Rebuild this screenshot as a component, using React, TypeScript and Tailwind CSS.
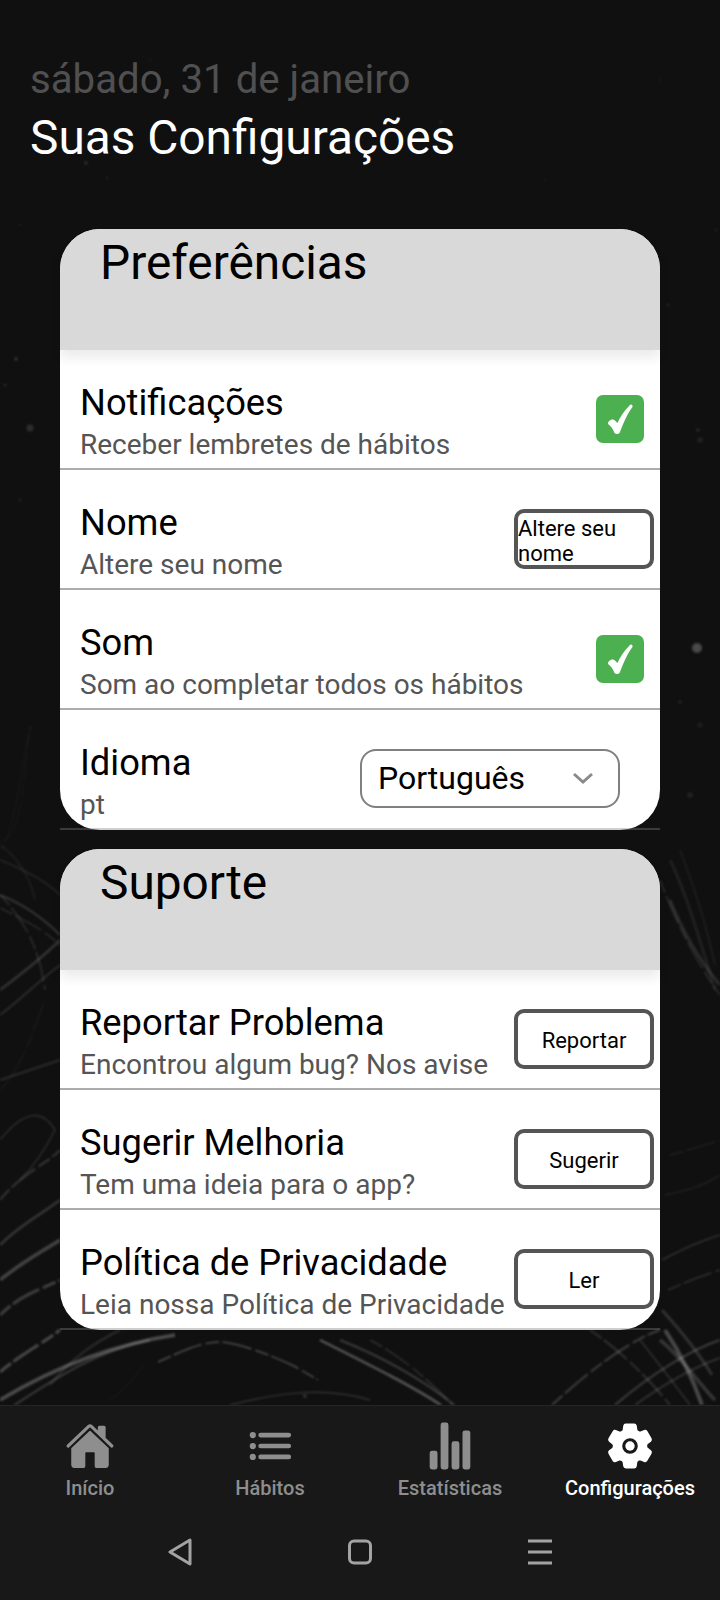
import React from "react";
import { IoHome, IoList, IoStatsChart, IoSettings } from "react-icons/io5";

const scratches: [string, number, number][] = [
  ["M158 1362 C185 1350 200 1342 222 1342 C245 1345 270 1355 294 1366 L318 1380", 0.26, 1.5],
  ["M320 1340 C370 1365 420 1390 445 1408", 0.3, 2.5],
  ["M340 1340 C390 1360 430 1385 458 1408", 0.18, 2],
  ["M370 1340 C400 1355 435 1385 455 1408", 0.14, 1.5],
  ["M0 1400 C50 1370 110 1345 175 1335", 0.26, 3.5],
  ["M10 1408 C60 1375 100 1350 150 1340", 0.18, 2],
  ["M0 1372 C20 1355 40 1345 60 1330", 0.24, 3],
  ["M110 1400 C130 1385 135 1375 145 1365", 0.08, 1],
  ["M230 1405 C270 1395 320 1385 370 1400", 0.14, 1.5],
  ["M552 1405 C590 1370 630 1340 660 1330", 0.2, 2],
  ["M615 1405 C650 1375 690 1350 720 1340", 0.2, 2],
  ["M635 1405 C670 1380 700 1365 720 1358", 0.14, 2],
  ["M590 1330 C620 1350 650 1380 670 1405", 0.14, 2],
  ["M665 1330 C685 1360 695 1385 702 1405", 0.24, 4],
  ["M640 1340 C660 1365 675 1385 690 1405", 0.12, 2],
  ["M0 895 C25 920 40 950 45 990", 0.1, 2],
  ["M0 845 C15 855 30 875 35 900", 0.08, 1.5],
  ["M0 850 C15 840 25 735 32 725", 0.05, 1],
  ["M0 842 C15 835 20 830 30 725", 0.05, 1],
  ["M0 895 C25 905 45 920 60 935", 0.16, 2],
  ["M0 860 C20 868 45 880 60 895", 0.1, 1.5],
  ["M0 908 C20 918 45 930 60 945", 0.12, 1.5],
  ["M0 990 C20 975 45 955 60 940", 0.15, 2.5],
  ["M0 1015 C20 1000 40 980 60 965", 0.12, 2],
  ["M0 1090 C20 1070 30 1040 45 1000", 0.05, 1.5],
  ["M0 1080 C30 1070 45 1065 60 1060", 0.12, 2],
  ["M0 1140 C20 1115 40 1105 55 1130 C45 1150 35 1165 20 1180", 0.12, 1.5],
  ["M0 1200 C20 1175 45 1165 60 1150", 0.16, 2],
  ["M0 1245 C20 1225 40 1215 60 1200", 0.16, 2.5],
  ["M0 1280 C25 1260 45 1250 60 1240", 0.22, 3.5],
  ["M0 1315 C20 1295 40 1290 60 1280", 0.2, 3],
  ["M670 860 C685 890 700 940 715 990", 0.07, 3],
  ["M670 900 C680 925 695 955 720 985", 0.12, 3],
  ["M660 880 C675 920 695 960 720 995", 0.1, 2],
  ["M680 850 C695 890 705 920 715 965", 0.06, 2],
  ["M660 1340 C680 1355 700 1385 715 1400", 0.16, 3.5],
  ["M670 1155 C690 1150 705 1145 720 1140", 0.08, 1.5],
  ["M665 1195 C690 1190 705 1185 720 1175", 0.08, 1.5],
  ["M662 1260 C690 1245 705 1240 720 1235", 0.14, 1.5],
  ["M668 1290 C690 1280 705 1275 720 1270", 0.14, 1.5],
  ["M662 1310 C680 1330 700 1355 712 1375", 0.14, 3],
  ["M120 1330 C90 1345 70 1360 50 1385", 0.12, 2],
];

const specks: [number, number, number, number][] = [
  [441, 122, 2, 0.07], [86, 163, 2, 0.1], [107, 178, 1.5, 0.07], [16, 359, 2, 0.14], [5, 385, 1.5, 0.1],
  [30, 428, 3.5, 0.12], [20, 500, 2, 0.05], [697, 648, 5, 0.24], [680, 702, 2, 0.07], [700, 725, 3, 0.05],
  [690, 795, 3, 0.07], [700, 440, 3, 0.07], [668, 305, 2, 0.06], [660, 80, 1.5, 0.04], [716, 230, 1.5, 0.07],
  [20, 225, 1.5, 0.05], [150, 60, 1.5, 0.05], [545, 180, 1.5, 0.04], [305, 1396, 2, 0.14], [698, 430, 2, 0.09],
];

function Row({ title, sub, last, children }: { title: string; sub: string; last?: boolean; children?: React.ReactNode }) {
  return (
    <div className={last ? "h-[120px] pt-[20px] border-b-2 border-[#80808060] flex items-center" : "h-[120px] pt-[20px] border-b-2 border-[#808080a6] flex items-center"}>
      <div className="pl-[20px] pt-[10px] flex-1 min-w-0">
        <div className="text-[36.3px] leading-[41px] text-black whitespace-nowrap">{title}</div>
        <div className="text-[28px] leading-[43px] text-[#555555] whitespace-nowrap">{sub}</div>
      </div>
      {children}
    </div>
  );
}

function Check() {
  return (
    <div className="w-[48px] h-[48px] mr-[16px] rounded-[7px] bg-[#4caf50] flex items-center justify-center shrink-0">
      <svg width="30" height="34" viewBox="0 0 30 34">
        <path d="M3 22 C6 24 8 27 9.5 31 C11 32.5 14 32.5 15 30 C18 22 22 12 27.5 5 C28 3 26 2 25 3 C19 9 15 15 12.5 21 C11 20 10 18 8 17.5 C5.5 17 2.5 20 3 22 Z" fill="#ffffff" />
      </svg>
    </div>
  );
}

function Btn({ children, left }: { children: React.ReactNode; left?: boolean }) {
  return (
    <div
      className={
        left
          ? "w-[140px] h-[60px] mr-[6px] shrink-0 bg-white border-4 border-[#555555] rounded-[10px] text-[22px] leading-[25px] text-black pt-[4px] flex items-center"
          : "w-[140px] h-[60px] mr-[6px] shrink-0 bg-white border-4 border-[#555555] rounded-[10px] text-[22px] leading-[25px] text-black flex items-center justify-center pt-[3px]"
      }
    >
      {children}
    </div>
  );
}

function Header({ children }: { children: React.ReactNode }) {
  return (
    <div className="h-[121px] rounded-t-[40px] bg-[#d9d9d9] pl-[40px] shadow-[0_8px_12px_rgba(0,0,0,0.08)] relative">
      <div className="text-[47.8px] leading-[68px] text-black">{children}</div>
    </div>
  );
}

function Card({ children }: { children: React.ReactNode }) {
  return <div className="w-[600px] ml-[60px] bg-white rounded-[40px]">{children}</div>;
}

function NavItem({ icon, label, active }: { icon: React.ReactNode; label: string; active?: boolean }) {
  return (
    <div className={active ? "w-[180px] flex flex-col items-center text-white" : "w-[180px] flex flex-col items-center text-[#8e8e8e]"}>
      <div className="h-[52px] flex items-center justify-center">{icon}</div>
      <div className="text-[20px] leading-[24px] font-medium mt-[4px] whitespace-nowrap">{label}</div>
    </div>
  );
}

export default function App() {
  return (
    <div className="w-[720px] h-[1600px] relative overflow-hidden bg-[#101010] flex flex-col font-['Roboto',sans-serif]">
      <svg className="absolute left-0 top-0 blur-[1px]" width="720" height="1405" viewBox="0 0 720 1405" fill="none">
        {scratches.map(([d, o, w], i) => (
          <path key={i} d={d} stroke="#ffffff" strokeOpacity={o} strokeWidth={w} strokeDasharray={i % 3 === 0 ? "14 3 30 4" : undefined} />
        ))}
        {specks.map(([x, y, r, o], i) => (
          <circle key={i} cx={x} cy={y} r={r} fill="#ffffff" fillOpacity={o} />
        ))}
      </svg>

      <main className="relative flex-1 min-h-0 pt-[56px]">
        <div className="pl-[30px]">
          <div className="text-[40.2px] leading-[48px] text-[#505050]">sábado, 31 de janeiro</div>
          <div className="text-[47.8px] leading-[48px] mt-[10px] text-white">Suas Configurações</div>
        </div>

        <div className="mt-[67px]">
          <Card>
            <Header>Preferências</Header>
            <Row title="Notificações" sub="Receber lembretes de hábitos"><Check /></Row>
            <Row title="Nome" sub="Altere seu nome"><Btn left>Altere seu nome</Btn></Row>
            <Row title="Som" sub="Som ao completar todos os hábitos"><Check /></Row>
            <Row title="Idioma" sub="pt" last>
              <div className="w-[260px] h-[59px] mr-[40px] -mt-[2px] shrink-0 rounded-[16px] border-2 border-[#808080] bg-white flex items-center justify-between pl-[16px] pr-[24px] text-[32px] text-black">
                <span>Português</span>
                <svg width="22" height="14" viewBox="0 0 22 14" fill="none">
                  <path d="M2 3 L11 11 L20 3" stroke="#8a8a8a" strokeWidth="3" />
                </svg>
              </div>
            </Row>
          </Card>
        </div>

        <div className="mt-[19px]">
          <Card>
            <Header>Suporte</Header>
            <Row title="Reportar Problema" sub="Encontrou algum bug? Nos avise"><Btn>Reportar</Btn></Row>
            <Row title="Sugerir Melhoria" sub="Tem uma ideia para o app?"><Btn>Sugerir</Btn></Row>
            <Row title="Política de Privacidade" sub="Leia nossa Política de Privacidade" last><Btn>Ler</Btn></Row>
          </Card>
        </div>
      </main>

      <nav className="relative h-[195px] bg-[#181818] border-t border-[#262626] shrink-0">
        <div className="flex pt-[14px]">
          <NavItem icon={<IoHome size={50} />} label="Início" />
          <NavItem icon={<IoList size={50} />} label="Hábitos" />
          <NavItem icon={<IoStatsChart size={50} />} label="Estatísticas" />
          <NavItem icon={<IoSettings size={50} />} label="Configurações" active />
        </div>
        <div className="flex mt-[38px] justify-center">
          <div className="w-[180px] flex justify-center">
            <svg width="26" height="28" viewBox="0 0 26 28" fill="none">
              <path d="M23 2 L3 14 L23 26 Z" stroke="#a3a3a3" strokeWidth="3" strokeLinejoin="round" />
            </svg>
          </div>
          <div className="w-[180px] flex justify-center">
            <svg width="26" height="28" viewBox="0 0 26 28" fill="none">
              <rect x="2.5" y="3" width="21" height="22" rx="4.5" stroke="#a3a3a3" strokeWidth="3" />
            </svg>
          </div>
          <div className="w-[180px] flex justify-center">
            <svg width="26" height="28" viewBox="0 0 26 28" fill="none">
              <path d="M1 3 H25 M1 14 H25 M1 25 H25" stroke="#a3a3a3" strokeWidth="3" />
            </svg>
          </div>
        </div>
      </nav>
    </div>
  );
}
